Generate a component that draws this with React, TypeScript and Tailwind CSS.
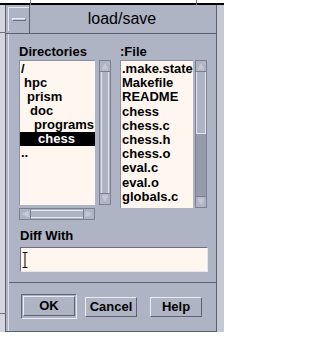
import React from 'react';

const DIRS: { name: string; indent: number; selected?: boolean }[] = [
  { name: '/', indent: 1 },
  { name: 'hpc', indent: 4 },
  { name: 'prism', indent: 7 },
  { name: 'doc', indent: 10 },
  { name: 'programs', indent: 14 },
  { name: 'chess', indent: 18, selected: true },
  { name: '..', indent: 1 },
];

const FILES = ['.make.state', 'Makefile', 'README', 'chess', 'chess.c', 'chess.h', 'chess.o', 'eval.c', 'eval.o', 'globals.c'];

const Arrow = ({ dir }: { dir: 'up' | 'down' | 'left' | 'right' }) => {
  const pts = {
    up: '5,1 9,9 1,9',
    down: '1,1 9,1 5,9',
    left: '1,5 9,1 9,9',
    right: '1,1 9,5 1,9',
  }[dir];
  return (
    <svg width="10" height="10" viewBox="0 0 10 10" className="block">
      <polygon points={pts} fill="#c4c9d6" stroke="#eef0f5" strokeWidth="1" />
      <polygon points={pts} fill="none" stroke="#7d8394" strokeWidth="0.6" strokeDasharray="0" />
    </svg>
  );
};

const VScroll = ({ height, thumb }: { height: number; thumb?: number }) => (
  <div
    className="flex flex-col w-[12px] border border-[#7a8092] bg-[#aeb4c4]"
    style={{ height }}
  >
    <div className="h-[11px] flex items-center justify-center border-b border-[#7a8092]">
      <Arrow dir="up" />
    </div>
    <div className="flex-1 flex flex-col">
      {thumb ? (
        <>
          <div className="border-x border-b border-[#e4e7ee] bg-[#aeb4c4]" style={{ height: thumb }} />
          <div className="flex-1 bg-[#959bad]" />
        </>
      ) : (
        <div className="flex-1 mx-[1px] border-x border-[#e4e7ee]" />
      )}
    </div>
    <div className="h-[11px] flex items-center justify-center border-t border-[#7a8092] bg-[#aeb4c4]">
      <Arrow dir="down" />
    </div>
  </div>
);

const Button = ({ label, isDefault }: { label: string; isDefault?: boolean }) => {
  const inner = (
    <div className="h-[20px] flex items-center justify-center border border-t-[#e8ebf1] border-l-[#e8ebf1] border-b-[#5e6475] border-r-[#5e6475] bg-[#aeb4c4] text-[13px] font-bold text-black">
      {label}
    </div>
  );
  return isDefault ? (
    <div className="w-[56px] h-[25px] p-[1px] border border-t-[#5e6475] border-l-[#5e6475] border-b-[#e8ebf1] border-r-[#e8ebf1]">
      {inner}
    </div>
  ) : (
    <div className="w-[52px] mt-[3px]">{inner}</div>
  );
};

export default function App() {
  return (
    <div
      className="relative w-[224px] h-[342px] bg-white overflow-hidden"
      style={{ fontFamily: '"Liberation Sans", Arial, sans-serif' }}
    >
      <div className="h-[3px] bg-white" />
      <div className="h-[2px] bg-black" />
      {/* stray window edges behind the dialog */}
      <div className="absolute left-[30px] top-0 w-[1px] h-[5px] bg-[#6e7484]" />
      <div className="absolute left-[196px] top-0 w-[1px] h-[5px] bg-[#6e7484]" />
      <div className="absolute left-0 top-[32px] w-[6px] h-[1px] bg-[#6e7484]" />
      <div className="absolute left-0 top-[313px] w-[6px] h-[1px] bg-[#6e7484]" />

      <div className="flex h-[327px]">
        <div className="w-[5px] bg-[#d3d6de]" />
        <div className="w-[212px] flex flex-col border-x border-b border-[#5a6070] bg-[#aeb4c4]">
          {/* title bar */}
          <div className="h-[29px] flex border-b border-[#5a6070]">
            <div className="w-[24px] border-r border-[#5a6070] pl-[2px] py-[2px]">
              <div className="h-full border-l border-t border-[#e4e7ee] flex items-center justify-center">
                <div className="w-[14px] h-[3px] border border-t-[#eef0f5] border-l-[#eef0f5] border-b-[#6a7080] border-r-[#6a7080] bg-[#c2c7d3]" />
              </div>
            </div>
            <div className="flex-1 flex items-center justify-center text-[16px] text-black pr-[2px]">
              load/save
            </div>
          </div>

          {/* body */}
          <div className="flex-1 flex flex-col ml-[2px] border-l border-[#dde0e8]">
            <div className="flex pl-[10px] pt-[10px]">
              <div className="flex flex-col w-[92px]">
                <div className="h-[16px] text-[13px] font-bold leading-[16px] text-black">Directories</div>
                <div className="flex gap-[4px]">
                  <div className="w-[76px] h-[145px] bg-[#fff6ef] border-t border-l border-[#8a90a0] pt-[1px]">
                    {DIRS.map((d) => (
                      <div
                        key={d.name}
                        className={`h-[14px] leading-[14px] text-[13px] font-bold whitespace-nowrap ${
                          d.selected ? 'bg-black text-white' : 'text-black'
                        }`}
                        style={{ paddingLeft: d.indent }}
                      >
                        {d.name}
                      </div>
                    ))}
                  </div>
                  <VScroll height={145} />
                </div>
                <div className="mt-[3px] w-[76px] h-[12px] flex border border-[#7a8092] bg-[#aeb4c4]">
                  <div className="w-[11px] flex items-center justify-center border-r border-[#7a8092]">
                    <Arrow dir="left" />
                  </div>
                  <div className="flex-1 my-[1px] border-y border-[#e4e7ee]" />
                  <div className="w-[11px] flex items-center justify-center border-l border-[#7a8092]">
                    <Arrow dir="right" />
                  </div>
                </div>
              </div>
              <div className="flex flex-col ml-[9px]">
                <div className="h-[16px] text-[13px] font-bold leading-[16px] text-black">:File</div>
                <div className="flex gap-[2px]">
                  <div className="w-[73px] h-[148px] bg-[#fff6ef] border-t border-l border-[#8a90a0] pt-[1px] overflow-hidden">
                    {FILES.map((f) => (
                      <div key={f} className="h-[14.2px] leading-[14px] text-[13px] font-bold text-black whitespace-nowrap pl-[1px]">
                        {f}
                      </div>
                    ))}
                  </div>
                  <VScroll height={148} thumb={62} />
                </div>
              </div>
            </div>

            <div className="pl-[11px] pr-[8px] mt-[8px]">
              <div className="h-[16px] leading-[16px] text-[13px] font-bold text-black">Diff With</div>
              <div className="mt-[3px] h-[25px] bg-[#fff6ef] border border-t-[#6a7080] border-l-[#6a7080] border-b-[#e4e7ee] border-r-[#e4e7ee] flex items-center pl-[1px]">
                <svg width="6" height="16" viewBox="0 0 6 16" className="block">
                  <path d="M0.5 0.5 H5.5 M3 0.5 V15.5 M0.5 15.5 H5.5" stroke="#000" strokeWidth="1" fill="none" />
                </svg>
              </div>
            </div>

            <div className="mt-[10px] border-t border-[#5e6475] h-[1px] bg-[#e4e7ee]" />

            <div className="flex pl-[12px] pt-[11px] gap-[8px]">
              <Button label="OK" isDefault />
              <Button label="Cancel" />
              <div className="ml-[5px]">
                <Button label="Help" />
              </div>
            </div>
          </div>
        </div>
        <div className="w-[7px] bg-[#c3c8d3]" />
      </div>
    </div>
  );
}
